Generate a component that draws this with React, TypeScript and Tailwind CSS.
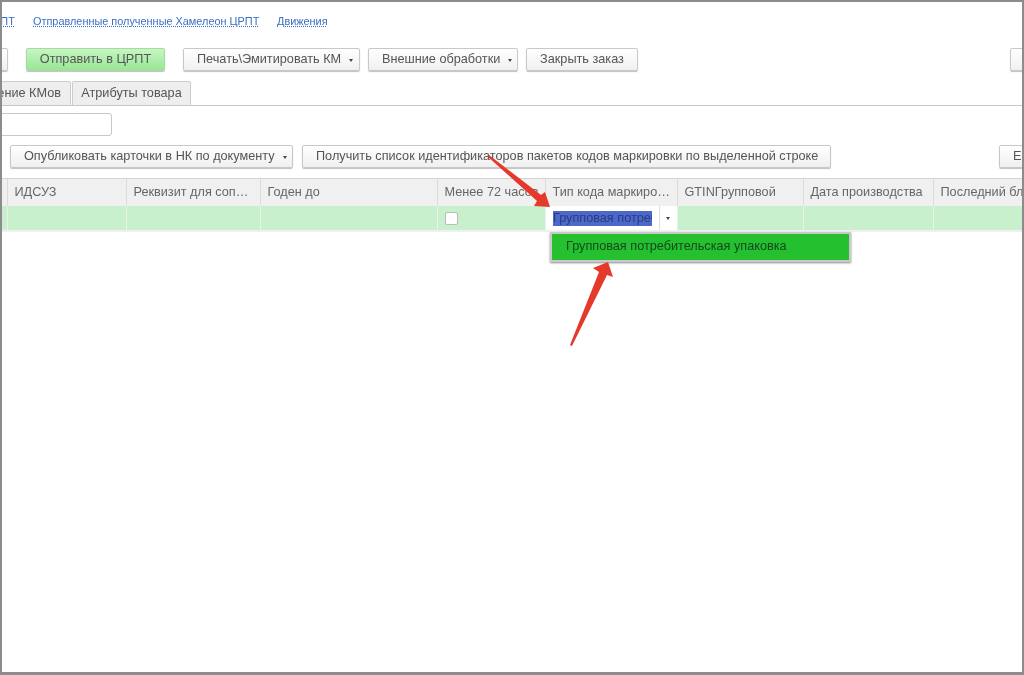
const btnBase =
  'flex h-[23px] shrink-0 items-center rounded-[2px] border shadow-[0_1px_1px_#c0c0c0] text-[12.7px] text-[#555] whitespace-nowrap bg-gradient-to-b'
const btn = `${btnBase} border-[#c8c8c8] from-white to-[#f0f0f0]`

const Caret = () => <span className="ml-[8px] mt-[1px] h-0 w-0 border-x-[2.5px] border-t-[3px] border-x-transparent border-t-[#444]" />

const columns = [
  { title: '', width: 'w-[6px]' },
  { title: 'ИДСУЗ', width: 'w-[119px]' },
  { title: 'Реквизит для соп…', width: 'w-[134px]' },
  { title: 'Годен до', width: 'w-[177px]' },
  { title: 'Менее 72 часов', width: 'w-[108px]' },
  { title: 'Тип кода маркиро…', width: 'w-[132px]' },
  { title: 'GTINГрупповой', width: 'w-[126px]' },
  { title: 'Дата производства', width: 'w-[130px]' },
  { title: 'Последний блок', width: 'w-[130px]' },
]

const Arrows = () => (
  <svg className="absolute left-0 top-0 h-[675px] w-[1024px]" viewBox="0 0 1024 675" fill="#e5392c">
    <polygon points="487,156 489,155 541,195 545,192 550,207 534,206 537,201" />
    <polygon points="570,345 572,346 607,275 613,277 608,262 593,268 599,272" />
  </svg>
)

export default function App() {
  return (
    <div
      className="relative h-[675px] w-[1024px] overflow-hidden border-b-[3px] border-l-[2px] border-r-[2px] border-t-[2px] border-[#8c8c8c] bg-white blur-[0.35px]"
      style={{ fontFamily: '"Liberation Sans", Arial, sans-serif' }}
    >
      <div className="mt-[10px] flex h-[19px] items-center text-[10.9px] text-[#3a6fc0] underline decoration-dotted">
        <span className="ml-[-17px] w-[48px]">ЦРПТ</span>
        <span className="w-[244px]">Отправленные полученные Хамелеон ЦРПТ</span>
        <span>Движения</span>
      </div>

      <div className="mt-[17px] flex">
        <div className={`${btn} ml-[-20px] w-[26px]`} />
        <div className={`${btnBase} ml-[18px] w-[139px] justify-center border-[#a8d8a4] from-[#c6f6c2] to-[#98e695]`}>Отправить в ЦРПТ</div>
        <div className={`${btn} ml-[18px] w-[177px] pl-[13px]`}>
          Печать\Эмитировать КМ
          <Caret />
        </div>
        <div className={`${btn} ml-[8px] w-[150px] pl-[13px]`}>
          Внешние обработки
          <Caret />
        </div>
        <div className={`${btn} ml-[8px] w-[112px] justify-center`}>Закрыть заказ</div>
        <div className={`${btn} ml-[372px] w-[40px]`} />
      </div>

      <div className="mt-[10px] flex h-[25px] border-b border-[#c8c8c8] text-[12.7px] text-[#555]">
        <div className="ml-[-60px] flex w-[129px] items-center justify-end rounded-t-[2px] border border-b-0 border-[#ccc] bg-[#eeeeee] pr-[9px]">
          Заполнение КМов
        </div>
        <div className="ml-px flex w-[119px] items-center justify-center rounded-t-[2px] border border-b-0 border-[#ccc] bg-[#eeeeee]">
          Атрибуты товара
        </div>
      </div>

      <div className="ml-[-20px] mt-[7px] h-[23px] w-[130px] rounded-[3px] border border-[#c8c8c8] bg-white" />

      <div className="mt-[9px] flex">
        <div className={`${btn} ml-[8px] w-[283px] pl-[13px]`}>
          Опубликовать карточки в НК по документу
          <Caret />
        </div>
        <div className={`${btn} ml-[9px] w-[529px] pl-[13px]`}>
          Получить список идентификаторов пакетов кодов маркировки по выделенной строке
        </div>
        <div className={`${btn} ml-[168px] w-[60px] pl-[13px]`}>Е</div>
      </div>

      <div className="mt-[10px] flex h-[28px] w-[1100px] border-t border-[#d4d4d4] bg-[#f0f0f0] text-[12.7px] text-[#666]">
        {columns.map((c, i) => (
          <div key={c.title} className={`${c.width} flex shrink-0 items-center overflow-hidden whitespace-nowrap border-r border-[#dcdcdc] ${i === 0 ? '' : 'pl-[6.5px]'}`}>
            {c.title}
          </div>
        ))}
      </div>

      <div className="flex h-[26px] w-[1100px] border-b-[2px] border-[#f0f0f0] bg-[#c8f0cc]">
        {columns.map((c, i) => (
          <div key={c.title} className={`${c.width} flex shrink-0 items-center border-r border-[#e4f6e6] ${i === 5 ? 'bg-white' : ''}`}>
            {i === 4 && <span className="ml-[7px] h-[13px] w-[13px] rounded-[2px] border border-[#bbb] bg-white" />}
            {i === 5 && (
              <>
                <span className="ml-[7px] w-[99px] overflow-hidden whitespace-nowrap bg-[#4c68c8] text-[12.7px] leading-[15px] text-[#2a3c80]">
                  Групповая потребительская
                </span>
                <span className="ml-[7px] h-full border-l border-[#ddd]" />
                <span className="ml-[6px] h-0 w-0 border-x-[2.5px] border-t-[3px] border-x-transparent border-t-[#444]" />
              </>
            )}
          </div>
        ))}
      </div>

      <div className="absolute left-[548px] top-[230px] flex h-[30px] w-[301px] items-center border-[2px] border-[#c9c9c9] bg-[#25c030] pl-[14px] text-[12.7px] text-[#14491c] shadow-[0_1px_2px_#888]">
        Групповая потребительская упаковка
      </div>

      <div className="absolute left-[-2px] top-[-2px]">
        <Arrows />
      </div>
    </div>
  )
}
